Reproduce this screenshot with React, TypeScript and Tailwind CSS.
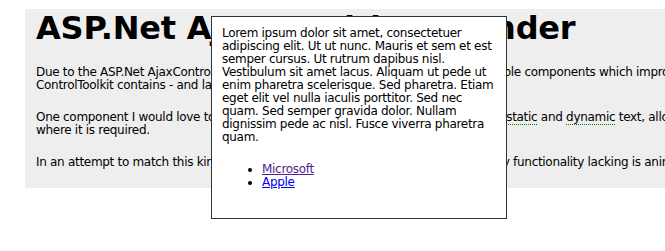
import React from "react";

const font = { fontFamily: '"DejaVu Sans", Verdana, sans-serif' };

export default function App() {
  return (
    <div className="relative w-[665px] h-[251px] overflow-hidden bg-white text-black" style={font}>
      <div className="pt-[9px] pl-[25px]">
        <div className="w-[900px] bg-[#eeeeee] pl-[11px] pb-[19px]">
          <h1 className="text-[32px] leading-[37px] font-bold whitespace-nowrap pt-px tracking-[-0.2px]">
            ASP.Net AJAX Tooltip Extender
          </h1>
          <p className="mt-[19px] text-[12px] leading-[13px] whitespace-nowrap tracking-[-0.3px]">
            Due to the ASP.Net AjaxControlToolkit being a very large collection of highly reusable components which improve the user experience, the Ajax
            <br />
            ControlToolkit contains - and lacks - a few important ones.
          </p>
          <p className="mt-[19px] text-[12px] leading-[13px] whitespace-nowrap tracking-[-0.3px]">
            One component I would love to see is a good tooltip extender that can show both{" "}
            <span className="border-b border-dotted border-[#008000]">static</span> and{" "}
            <span className="border-b border-dotted border-[#008000]">dynamic</span> text, allowing help to be shown
            <br />
            where it is required.
          </p>
          <p className="mt-[19px] text-[12px] leading-[13px] whitespace-nowrap tracking-[-0.3px]">
            In an attempt to match this kind of look and feel, I quickly figured out that the only functionality lacking is animation of the tooltip.
          </p>
        </div>
      </div>

      <div className="absolute left-[211px] top-[16px] w-[296px] h-[203px] border border-[#333333] bg-white px-[10px] pt-[10px] text-[12px] leading-[13px] tracking-[-0.3px]">
        <div className="whitespace-nowrap">
          Lorem ipsum dolor sit amet, consectetuer
          <br />
          adipiscing elit. Ut ut nunc. Mauris et sem et est
          <br />
          semper cursus. Ut rutrum dapibus nisl.
          <br />
          Vestibulum sit amet lacus. Aliquam ut pede ut
          <br />
          enim pharetra scelerisque. Sed pharetra. Etiam
          <br />
          eget elit vel nulla iaculis porttitor. Sed nec
          <br />
          quam. Sed semper gravida dolor. Nullam
          <br />
          dignissim pede ac nisl. Fusce viverra pharetra
          <br />
          quam.
        </div>
        <ul className="mt-[19px] pl-[40px] list-disc">
          <li>
            <a href="#" className="underline text-[#551a8b]">Microsoft</a>
          </li>
          <li>
            <a href="#" className="underline text-[#0000ee]">Apple</a>
          </li>
        </ul>
      </div>
    </div>
  );
}
